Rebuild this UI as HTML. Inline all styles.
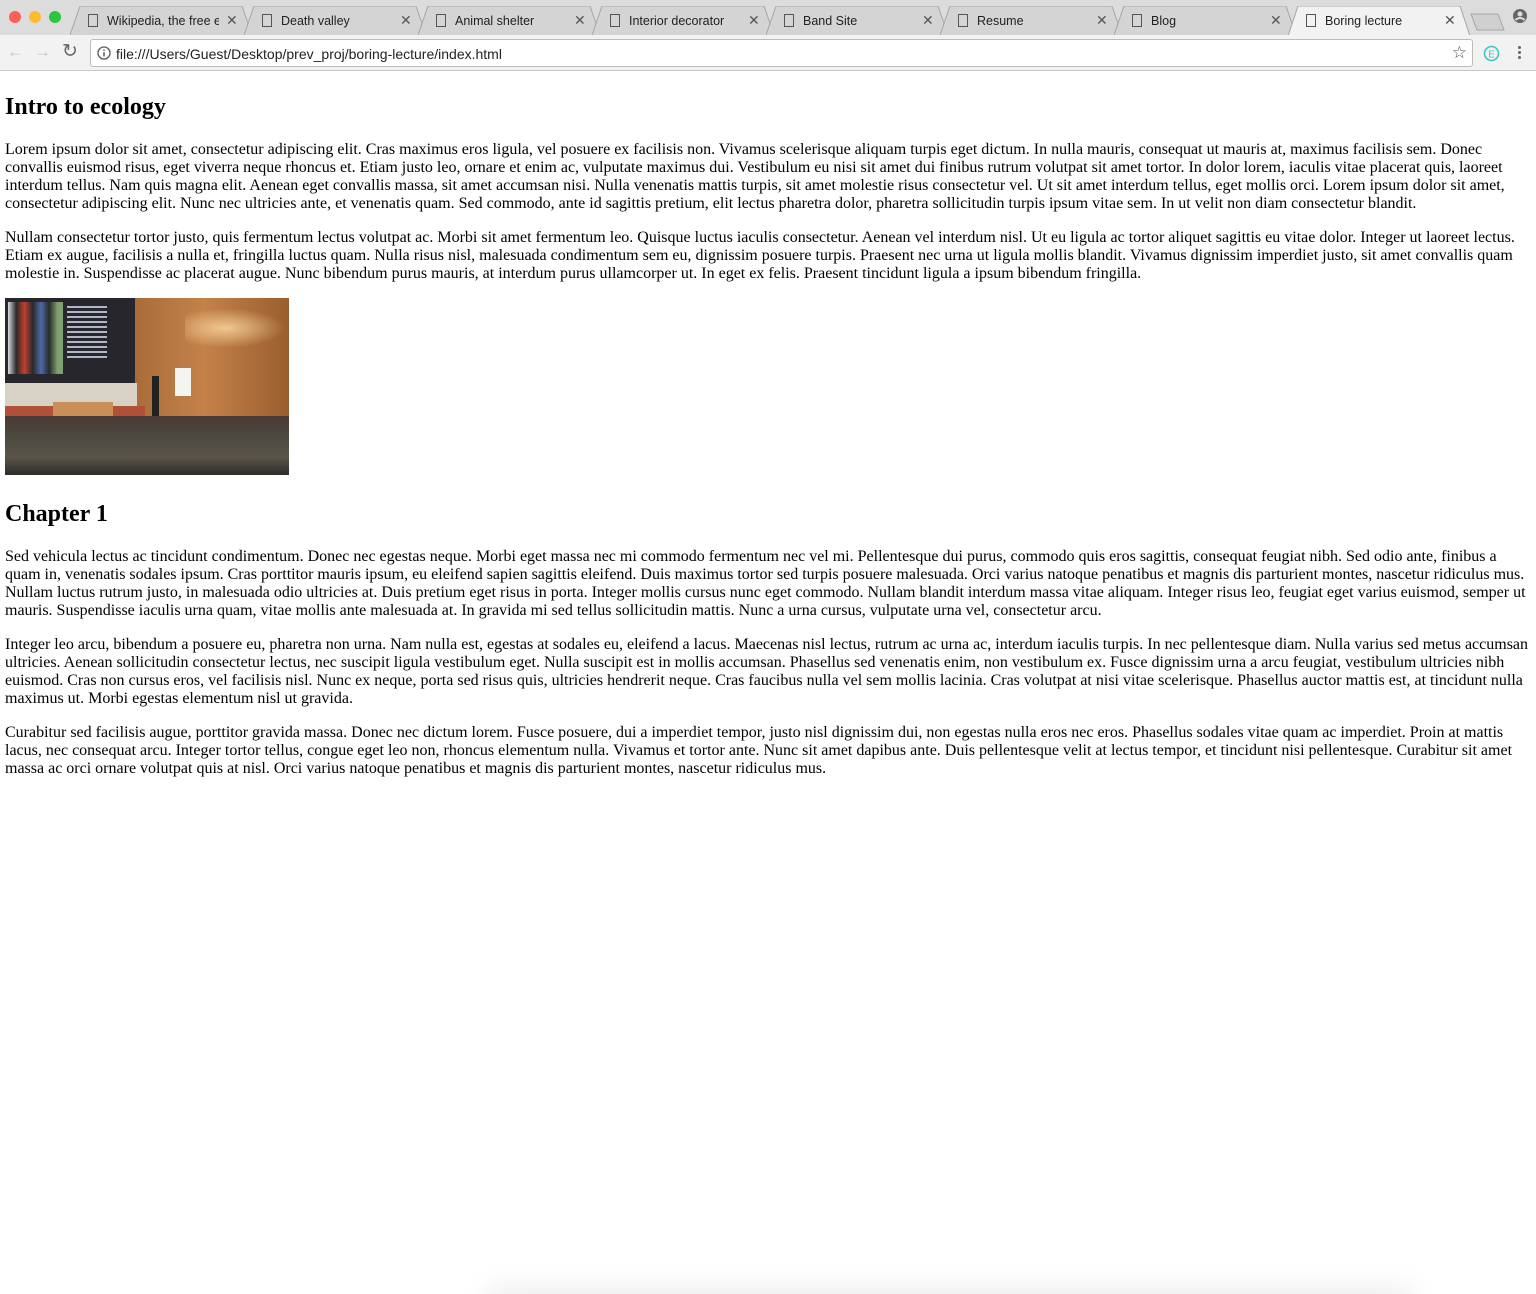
<!DOCTYPE html>
<html><head><meta charset="utf-8">
<style>
*{box-sizing:border-box}
html,body{margin:0;padding:0;background:#fff;width:1536px;height:1294px;overflow:hidden}
#chrome{position:absolute;left:0;top:0;width:1536px;height:72px;font-family:"Liberation Sans",sans-serif}
#tabbar{position:absolute;top:0;left:0;width:1536px;height:35px;background:#dcdcdc}
.dot{position:absolute;top:11px;width:12px;height:12px;border-radius:50%}
.tab{position:absolute;top:6px;height:29px;width:182px;}
.tab .sh{position:absolute;left:0;top:0;width:182px;height:29px}
.tab .ic{position:absolute;left:18px;top:8px;width:10px;height:13px;border:1px solid #555;background:transparent}
.tab .t{position:absolute;left:37px;top:8px;font-size:12.5px;color:#222;white-space:nowrap;overflow:hidden;width:120px}
.tab .x{position:absolute;left:156px;top:6px;font-size:14px;color:#555}
#toolbar{position:absolute;top:35px;left:0;width:1536px;height:36px;background:#f2f2f2;border-bottom:1px solid #c8c8c8}
#omni{position:absolute;left:90px;top:4px;width:1383px;height:28px;background:#fff;border:1px solid #bdbdbd;border-radius:3px}
#url{position:absolute;left:25px;top:6px;font-size:14px;color:#222}
#content{position:absolute;top:73px;left:0;width:1536px;padding:0 5px;font-family:"Liberation Serif",serif;font-size:16px;line-height:18px;color:#000}
h2{font-size:24px;line-height:28px;margin:19.92px 0;font-weight:bold}
p{margin:16px 0}
#img{display:inline-block;width:284px;height:177px;position:relative;overflow:hidden;vertical-align:baseline;background:linear-gradient(90deg,#8a5a30 0%,#a86b38 45%,#c4824a 70%,#9a5e2e 100%)}
</style></head><body>
<div id="chrome">
<div id="tabbar">
<div class="dot" style="left:9px;background:#fc5f57"></div>
<div class="dot" style="left:29px;background:#fdbc2e"></div>
<div class="dot" style="left:49px;background:#29c73f"></div>
<div class="tab" style="left:70px"><svg class="sh"><path d="M0 29 L10 0 L172 0 L182 29" fill="#d4d4d4" stroke="#a6a6a6"/></svg><div class="ic"></div><div class="t" style="width:112px">Wikipedia, the free en</div><div class="x">✕</div></div>
<div class="tab" style="left:244px"><svg class="sh"><path d="M0 29 L10 0 L172 0 L182 29" fill="#d4d4d4" stroke="#a6a6a6"/></svg><div class="ic"></div><div class="t">Death valley</div><div class="x">✕</div></div>
<div class="tab" style="left:418px"><svg class="sh"><path d="M0 29 L10 0 L172 0 L182 29" fill="#d4d4d4" stroke="#a6a6a6"/></svg><div class="ic"></div><div class="t">Animal shelter</div><div class="x">✕</div></div>
<div class="tab" style="left:592px"><svg class="sh"><path d="M0 29 L10 0 L172 0 L182 29" fill="#d4d4d4" stroke="#a6a6a6"/></svg><div class="ic"></div><div class="t">Interior decorator</div><div class="x">✕</div></div>
<div class="tab" style="left:766px"><svg class="sh"><path d="M0 29 L10 0 L172 0 L182 29" fill="#d4d4d4" stroke="#a6a6a6"/></svg><div class="ic"></div><div class="t">Band Site</div><div class="x">✕</div></div>
<div class="tab" style="left:940px"><svg class="sh"><path d="M0 29 L10 0 L172 0 L182 29" fill="#d4d4d4" stroke="#a6a6a6"/></svg><div class="ic"></div><div class="t">Resume</div><div class="x">✕</div></div>
<div class="tab" style="left:1114px"><svg class="sh"><path d="M0 29 L10 0 L172 0 L182 29" fill="#d4d4d4" stroke="#a6a6a6"/></svg><div class="ic"></div><div class="t">Blog</div><div class="x">✕</div></div>
<div class="tab" style="left:1288px"><svg class="sh"><path d="M0 30 L10 0 L172 0 L182 30" fill="#f2f2f2" stroke="#a6a6a6"/></svg><div class="ic"></div><div class="t">Boring lecture</div><div class="x">✕</div></div>
<svg style="position:absolute;left:1470px;top:13px" width="36" height="18"><path d="M1 1 L28 1 L34 17 L7 17 Z" fill="#d0d0d0" stroke="#a6a6a6"/></svg>
<svg style="position:absolute;left:1512px;top:8px" width="16" height="16"><circle cx="8" cy="8" r="7" fill="#666"/><circle cx="8" cy="6" r="2.5" fill="#dcdcdc"/><path d="M3.5 12 Q8 8 12.5 12" stroke="#dcdcdc" stroke-width="2" fill="none"/></svg>
</div>
<div id="toolbar">
<span style="position:absolute;left:7px;top:7px;color:#c4c4c4;font-size:17px">←</span>
<span style="position:absolute;left:34px;top:7px;color:#c4c4c4;font-size:17px">→</span>
<span style="position:absolute;left:62px;top:5px;color:#666;font-size:19px">↻</span>
<div id="omni">
<svg style="position:absolute;left:6px;top:6px" width="14" height="14"><circle cx="7" cy="7" r="6" fill="none" stroke="#555" stroke-width="1.3"/><rect x="6.3" y="6" width="1.4" height="4.5" fill="#555"/><rect x="6.3" y="3.5" width="1.4" height="1.4" fill="#555"/></svg>
<div id="url">file:///Users/Guest/Desktop/prev_proj/boring-lecture/index.html</div>
<span style="position:absolute;right:5px;top:3px;font-size:17px;color:#555">☆</span>
</div>
<svg style="position:absolute;left:1483px;top:10px" width="17" height="17"><circle cx="8.5" cy="8.5" r="7" fill="none" stroke="#3cc6c0" stroke-width="1.6"/><text x="5.2" y="12.5" font-size="10" font-family="Liberation Sans" fill="#3cc6c0">E</text></svg>
<div style="position:absolute;left:1518px;top:11px;width:3px">
<div style="width:3px;height:3px;background:#666;border-radius:50%;margin-bottom:2px"></div><div style="width:3px;height:3px;background:#666;border-radius:50%;margin-bottom:2px"></div><div style="width:3px;height:3px;background:#666;border-radius:50%"></div></div>
</div>
</div>
<div id="content">
<h2>Intro to ecology</h2>
<p>Lorem ipsum dolor sit amet, consectetur adipiscing elit. Cras maximus eros ligula, vel posuere ex facilisis non. Vivamus scelerisque aliquam turpis eget dictum. In nulla mauris, consequat ut mauris at, maximus facilisis sem. Donec convallis euismod risus, eget viverra neque rhoncus et. Etiam justo leo, ornare et enim ac, vulputate maximus dui. Vestibulum eu nisi sit amet dui finibus rutrum volutpat sit amet tortor. In dolor lorem, iaculis vitae placerat quis, laoreet interdum tellus. Nam quis magna elit. Aenean eget convallis massa, sit amet accumsan nisi. Nulla venenatis mattis turpis, sit amet molestie risus consectetur vel. Ut sit amet interdum tellus, eget mollis orci. Lorem ipsum dolor sit amet, consectetur adipiscing elit. Nunc nec ultricies ante, et venenatis quam. Sed commodo, ante id sagittis pretium, elit lectus pharetra dolor, pharetra sollicitudin turpis ipsum vitae sem. In ut velit non diam consectetur blandit.</p>
<p style="margin-bottom:15px">Nullam consectetur tortor justo, quis fermentum lectus volutpat ac. Morbi sit amet fermentum leo. Quisque luctus iaculis consectetur. Aenean vel interdum nisl. Ut eu ligula ac tortor aliquet sagittis eu vitae dolor. Integer ut laoreet lectus. Etiam ex augue, facilisis a nulla et, fringilla luctus quam. Nulla risus nisl, malesuada condimentum sem eu, dignissim posuere turpis. Praesent nec urna ut ligula mollis blandit. Vivamus dignissim imperdiet justo, sit amet convallis quam molestie in. Suspendisse ac placerat augue. Nunc bibendum purus mauris, at interdum purus ullamcorper ut. In eget ex felis. Praesent tincidunt ligula a ipsum bibendum fringilla.</p>
<p style="margin-top:15px"><span id="img">
<span style="position:absolute;left:0;top:0;width:130px;height:85px;background:#26262c"></span>
<span style="position:absolute;left:3px;top:4px;width:55px;height:72px;background:linear-gradient(90deg,#d8dce4 0%,#2a2a2a 15%,#c04030 30%,#2a2a2a 45%,#4c6aa8 60%,#2a2a2a 75%,#7fa070 90%)"></span>
<span style="position:absolute;left:62px;top:8px;width:40px;height:55px;background:repeating-linear-gradient(180deg,#b0b8c8 0 2px,#26262c 2px 5px)"></span>
<span style="position:absolute;left:0;top:85px;width:132px;height:25px;background:#d8d2c4"></span>
<span style="position:absolute;left:0;top:108px;width:140px;height:14px;background:#b05038"></span>
<span style="position:absolute;left:48px;top:104px;width:60px;height:16px;background:#c89058"></span>
<span style="position:absolute;left:170px;top:70px;width:16px;height:28px;background:#f4f4f0"></span>
<span style="position:absolute;left:147px;top:78px;width:7px;height:40px;background:#222"></span>
<span style="position:absolute;left:0;top:118px;width:284px;height:59px;background:linear-gradient(180deg,#4a3a34,#4c4c42 40%,#5a5448 70%,#2c2c28)"></span>
<span style="position:absolute;left:180px;top:10px;width:100px;height:40px;background:radial-gradient(ellipse at 40% 50%,#f0c890,transparent 70%)"></span>
</span></p>
<h2>Chapter 1</h2>
<p>Sed vehicula lectus ac tincidunt condimentum. Donec nec egestas neque. Morbi eget massa nec mi commodo fermentum nec vel mi. Pellentesque dui purus, commodo quis eros sagittis, consequat feugiat nibh. Sed odio ante, finibus a quam in, venenatis sodales ipsum. Cras porttitor mauris ipsum, eu eleifend sapien sagittis eleifend. Duis maximus tortor sed turpis posuere malesuada. Orci varius natoque penatibus et magnis dis parturient montes, nascetur ridiculus mus. Nullam luctus rutrum justo, in malesuada odio ultricies at. Duis pretium eget risus in porta. Integer mollis cursus nunc eget commodo. Nullam blandit interdum massa vitae aliquam. Integer risus leo, feugiat eget varius euismod, semper ut mauris. Suspendisse iaculis urna quam, vitae mollis ante malesuada at. In gravida mi sed tellus sollicitudin mattis. Nunc a urna cursus, vulputate urna vel, consectetur arcu.</p>
<p>Integer leo arcu, bibendum a posuere eu, pharetra non urna. Nam nulla est, egestas at sodales eu, eleifend a lacus. Maecenas nisl lectus, rutrum ac urna ac, interdum iaculis turpis. In nec pellentesque diam. Nulla varius sed metus accumsan ultricies. Aenean sollicitudin consectetur lectus, nec suscipit ligula vestibulum eget. Nulla suscipit est in mollis accumsan. Phasellus sed venenatis enim, non vestibulum ex. Fusce dignissim urna a arcu feugiat, vestibulum ultricies nibh euismod. Cras non cursus eros, vel facilisis nisl. Nunc ex neque, porta sed risus quis, ultricies hendrerit neque. Cras faucibus nulla vel sem mollis lacinia. Cras volutpat at nisi vitae scelerisque. Phasellus auctor mattis est, at tincidunt nulla maximus ut. Morbi egestas elementum nisl ut gravida.</p>
<p>Curabitur sed facilisis augue, porttitor gravida massa. Donec nec dictum lorem. Fusce posuere, dui a imperdiet tempor, justo nisl dignissim dui, non egestas nulla eros nec eros. Phasellus sodales vitae quam ac imperdiet. Proin at mattis lacus, nec consequat arcu. Integer tortor tellus, congue eget leo non, rhoncus elementum nulla. Vivamus et tortor ante. Nunc sit amet dapibus ante. Duis pellentesque velit at lectus tempor, et tincidunt nisi pellentesque. Curabitur sit amet massa ac orci ornare volutpat quis at nisl. Orci varius natoque penatibus et magnis dis parturient montes, nascetur ridiculus mus.</p>
</div>
<div style="position:absolute;left:0;top:0;width:1536px;height:1294px;overflow:hidden;pointer-events:none">
<div style="position:absolute;left:500px;top:1300px;width:900px;height:20px;box-shadow:0 0 30px 12px rgba(0,0,0,0.08)"></div>
</div>
</body></html>
